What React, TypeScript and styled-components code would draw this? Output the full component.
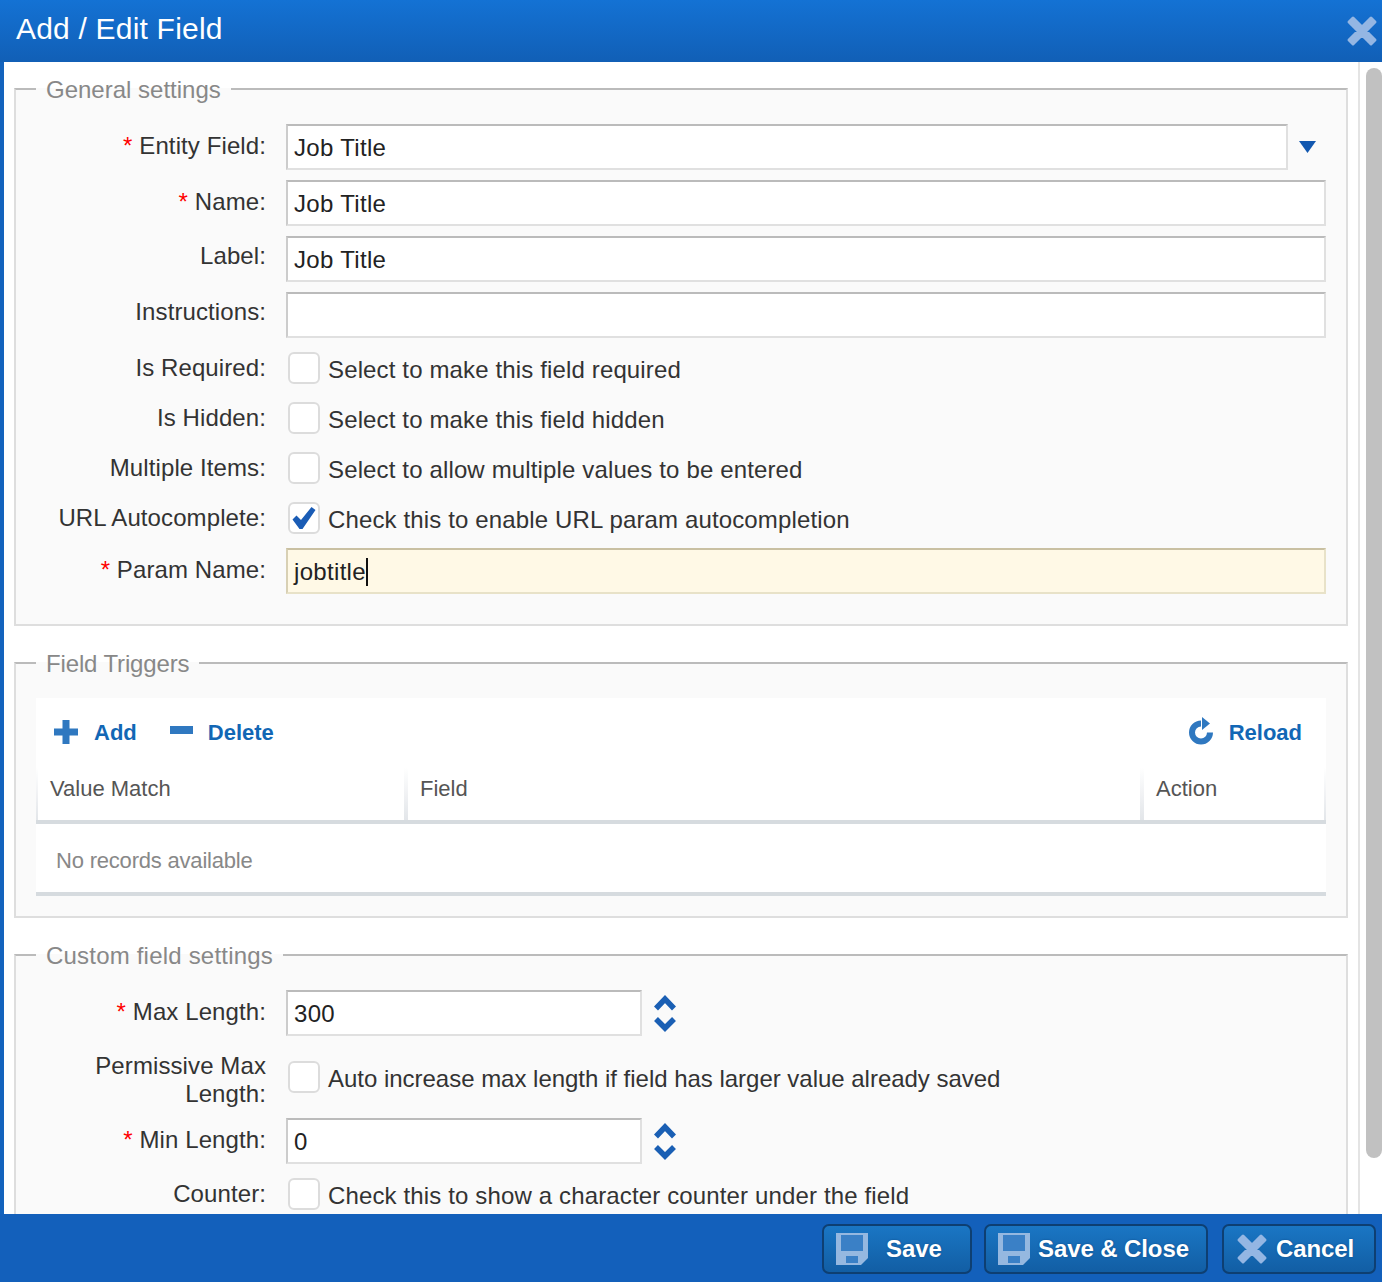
import React from "react";
import styled, { createGlobalStyle } from "styled-components";

const Global = createGlobalStyle`
  html, body { margin: 0; padding: 0; background: #fff; }
  * { box-sizing: border-box; }
  body { font-family: "Liberation Sans", Arial, sans-serif; font-size: 24px; color: #333; }
`;

const Dialog = styled.div`
  width: 1382px;
  height: 1282px;
  display: flex;
  flex-direction: column;
  overflow: hidden;
`;

const TitleBar = styled.header`
  height: 62px;
  flex: none;
  display: flex;
  align-items: center;
  justify-content: space-between;
  padding: 0 4px 0 16px;
  background: linear-gradient(#1472d4, #115fb6);
`;

const Title = styled.h1`
  margin: 0 0 4px;
  font-size: 30px;
  font-weight: 400;
  letter-spacing: 0.2px;
  color: #fff;
`;

const Middle = styled.div`
  flex: 1;
  min-height: 0;
  display: flex;
  border-left: 4px solid #1363bd;
`;

const Content = styled.main`
  width: 1356px;
  flex: none;
  overflow: hidden;
  padding: 13px 10px 0;
  background: #fff;
  border-right: 2px solid #e4e4e4;
`;

const ScrollTrack = styled.div`
  flex: 1;
  padding: 6px 0 0 6px;
  background: #fff;
`;

const ScrollThumb = styled.div`
  height: 1090px;
  background: #c1c1c1;
  border-radius: 8px;
`;

const Group = styled.fieldset<{ $bottom: number }>`
  margin: 0 0 23px;
  padding: 21px 20px ${(p) => p.$bottom}px;
  min-width: 0;
  background: #fafafa;
  border: 2px solid #dedede;
  border-top-color: #bbb;
`;

const Legend = styled.legend<{ $spacing?: number }>`
  padding: 2px 10px 0;
  font-size: 24px;
  line-height: 26px;
  letter-spacing: ${(p) => p.$spacing ?? 0}px;
  color: #888;
`;

const Row = styled.div<{ $h?: number }>`
  display: flex;
  align-items: flex-start;
  gap: 20px;
  min-height: ${(p) => p.$h ?? 46}px;
  margin-bottom: 10px;
`;

const Label = styled.label<{ $required?: boolean }>`
  width: 230px;
  flex: none;
  padding-top: ${(p) => (p.$required ? 8 : 6)}px;
  line-height: 28px;
  text-align: right;
  color: #333;
  letter-spacing: 0.1px;
`;

const Star = styled.span`
  color: #f00;
`;

const Control = styled.div`
  flex: 1;
  min-width: 0;
  align-self: stretch;
  display: flex;
  align-items: center;
`;

const TextField = styled.div<{ $width?: number; $focused?: boolean }>`
  height: 46px;
  flex: ${(p) => (p.$width ? `0 0 ${p.$width}px` : "1")};
  display: flex;
  align-items: center;
  padding: 2px 6px 0;
  font-size: 24px;
  letter-spacing: 0.32px;
  color: #222;
  border: 2px solid ${(p) => (p.$focused ? "#e8e2c8" : "#e0e0e0")};
  border-top-color: ${(p) => (p.$focused ? "#c9c0a2" : "#bbb")};
  border-left-color: ${(p) => (p.$focused ? "#d8d0b4" : "#ccc")};
  background: ${(p) => (p.$focused ? "#fff9e6" : "#fff")};
`;

const Caret = styled.span`
  width: 2px;
  height: 28px;
  background: #111;
`;

const ArrowSlot = styled.div`
  width: 38px;
  flex: none;
  display: flex;
  justify-content: center;
`;

const Spinner = styled.svg`
  margin-left: 12px;
  flex: none;
  display: block;
`;

const CheckBox = styled.span`
  width: 32px;
  height: 32px;
  margin-left: 2px;
  flex: none;
  display: flex;
  align-items: center;
  justify-content: center;
  border: 2px solid #dcdcdc;
  border-radius: 6px;
  background: #fff;
`;

const CheckText = styled.span<{ $spacing?: number }>`
  margin-left: 8px;
  padding-top: 4px;
  letter-spacing: ${(p) => p.$spacing ?? 0.14}px;
  color: #333;
`;

const Grid = styled.section`
  background: #fff;
  border-bottom: 4px solid #d6dbdf;
`;

const Toolbar = styled.div`
  height: 70px;
  display: flex;
  align-items: center;
  padding: 0 24px 0 18px;
`;

const ToolButton = styled.span<{ $gap: number; $after?: string }>`
  display: flex;
  align-items: center;
  gap: ${(p) => p.$gap}px;
  margin-right: ${(p) => p.$after ?? "0"};
  font-size: 22px;
  font-weight: 700;
  color: #1267b5;
`;

const ToolIcon = styled.svg<{ $lift: number }>`
  display: block;
  flex: none;
  margin-top: -${(p) => p.$lift}px;
`;

const HeadRow = styled.div`
  display: grid;
  grid-template-columns: 372px 736px 182px;
  height: 56px;
  border-bottom: 4px solid #d6dbdf;
`;

const HeadCell = styled.div<{ $left?: boolean; $right: number }>`
  display: flex;
  align-items: center;
  padding: 0 0 10px 12px;
  font-size: 22px;
  color: #555;
  border-style: solid;
  border-width: 0 ${(p) => p.$right}px 0 ${(p) => (p.$left ? 2 : 0)}px;
  border-image: linear-gradient(#fff, #e2e5e9) 1;
`;

const EmptyRow = styled.div`
  height: 68px;
  display: flex;
  align-items: center;
  padding: 6px 0 0 20px;
  font-size: 22px;
  letter-spacing: -0.2px;
  color: #888;
`;

const Footer = styled.footer`
  height: 68px;
  flex: none;
  display: flex;
  justify-content: flex-end;
  align-items: flex-start;
  padding: 10px 6px 0 0;
  background: #1360bb;
`;

const Button = styled.button<{ $w: number; $ml: number; $gap: number }>`
  width: ${(p) => p.$w}px;
  height: 50px;
  margin-left: ${(p) => p.$ml}px;
  display: flex;
  align-items: center;
  gap: ${(p) => p.$gap}px;
  padding: 0 0 0 12px;
  font-family: inherit;
  font-size: 24px;
  font-weight: 700;
  letter-spacing: -0.1px;
  color: #fff;
  text-shadow: 0 0 2px #0d4a86;
  border: 2px solid #0e3f72;
  border-radius: 7px;
  background: linear-gradient(#1a76c4, #125ea4);
`;

const CloseX = () => (
  <svg width="32" height="32" viewBox="0 0 32 32" aria-hidden="true">
    <path
      d="M7 3 L16 12 L25 3 L29 7 L20 16 L29 25 L25 29 L16 20 L7 29 L3 25 L12 16 L3 7Z"
      fill="#94b6e3"
      stroke="#94b6e3"
      strokeWidth="3"
      strokeLinejoin="round"
    />
  </svg>
);

const Disk = () => (
  <svg width="32" height="32" viewBox="0 0 32 32" aria-hidden="true">
    <path fill="#95b8e0" d="M0 0H32V25L25 32H0Z" />
    <path fill="#3a80c6" d="M5 2H27V18H5Z M10 23H22V30H10Z" />
  </svg>
);

const Check = () => (
  <svg width="24" height="24" viewBox="0 0 24 24" aria-hidden="true">
    <path d="M0.5 13.5 L4.5 9.5 L9 14 L19.5 1 L23.5 4 L10.5 23 L7.5 23Z" fill="#1a5cb5" />
  </svg>
);

const TextRow = ({ label, required, value, focused }: { label: string; required?: boolean; value: string; focused?: boolean }) => (
  <Row>
    <Label $required={required}>
      {required && <Star>* </Star>}
      {label}
    </Label>
    <Control>
      <TextField $focused={focused}>
        {value}
        {focused && <Caret />}
      </TextField>
    </Control>
  </Row>
);

const CheckRow = ({ label, text, checked, h = 40, spacing }: { label: React.ReactNode; text: string; checked?: boolean; h?: number; spacing?: number }) => (
  <Row $h={h}>
    <Label>{label}</Label>
    <Control>
      <CheckBox>{checked && <Check />}</CheckBox>
      <CheckText $spacing={spacing}>{text}</CheckText>
    </Control>
  </Row>
);

const NumberRow = ({ label, value }: { label: string; value: string }) => (
  <Row>
    <Label $required>
      <Star>* </Star>
      {label}
    </Label>
    <Control>
      <TextField $width={356}>{value}</TextField>
      <Spinner width="22" height="38" viewBox="0 0 22 38" aria-hidden="true">
        <path d="M2 14.5 L11 5 L20 14.5 M2 25 L11 34 L20 25" stroke="#1a5fb4" strokeWidth="5.5" fill="none" />
      </Spinner>
    </Control>
  </Row>
);

export default function App() {
  return (
    <Dialog>
      <Global />
      <TitleBar>
        <Title>Add / Edit Field</Title>
        <CloseX />
      </TitleBar>
      <Middle>
        <Content>
          <Group $bottom={20}>
            <Legend>General settings</Legend>
            <Row>
              <Label $required>
                <Star>* </Star>Entity Field:
              </Label>
              <Control>
                <TextField>Job Title</TextField>
                <ArrowSlot>
                  <svg width="17" height="12" viewBox="0 0 17 12" aria-hidden="true">
                    <path d="M0 0H17L8.5 12Z" fill="#1258b0" />
                  </svg>
                </ArrowSlot>
              </Control>
            </Row>
            <TextRow label="Name:" required value="Job Title" />
            <TextRow label="Label:" value="Job Title" />
            <TextRow label="Instructions:" value="" />
            <CheckRow label="Is Required:" text="Select to make this field required" />
            <CheckRow label="Is Hidden:" text="Select to make this field hidden" />
            <CheckRow label="Multiple Items:" text="Select to allow multiple values to be entered" />
            <CheckRow label="URL Autocomplete:" text="Check this to enable URL param autocompletion" checked />
            <TextRow label="Param Name:" required value="jobtitle" focused />
          </Group>
          <Group $bottom={20}>
            <Legend $spacing={-0.14}>Field Triggers</Legend>
            <Grid>
              <Toolbar>
                <ToolButton $gap={16} $after="33px">
                  <ToolIcon $lift={3} width="24" height="24" viewBox="0 0 24 24" aria-hidden="true">
                    <path d="M8.5 0H15.5V8.5H24V15.5H15.5V24H8.5V15.5H0V8.5H8.5Z" fill="#2f78c0" />
                  </ToolIcon>
                  Add
                </ToolButton>
                <ToolButton $gap={15} $after="auto">
                  <ToolIcon $lift={6} width="23" height="8" viewBox="0 0 23 8" aria-hidden="true">
                    <rect width="23" height="8" fill="#2f78c0" />
                  </ToolIcon>
                  Delete
                </ToolButton>
                <ToolButton $gap={16}>
                  <ToolIcon $lift={4} width="24" height="28" viewBox="0 0 24 28" aria-hidden="true">
                    <path d="M12 6.5 A9 9 0 1 0 21 15.5" stroke="#2f78c0" strokeWidth="6" fill="none" />
                    <path d="M13 0 L21 6.5 L13 13Z" fill="#2f78c0" />
                  </ToolIcon>
                  Reload
                </ToolButton>
              </Toolbar>
              <HeadRow>
                <HeadCell $left $right={4}>Value Match</HeadCell>
                <HeadCell $right={4}>Field</HeadCell>
                <HeadCell $right={2}>Action</HeadCell>
              </HeadRow>
              <EmptyRow>No records available</EmptyRow>
            </Grid>
          </Group>
          <Group $bottom={30}>
            <Legend $spacing={0.2}>Custom field settings</Legend>
            <NumberRow label="Max Length:" value="300" />
            <CheckRow
              h={62}
              label="Permissive Max Length:"
              text="Auto increase max length if field has larger value already saved"
              spacing={-0.02}
            />
            <NumberRow label="Min Length:" value="0" />
            <CheckRow label="Counter:" text="Check this to show a character counter under the field" />
          </Group>
        </Content>
        <ScrollTrack>
          <ScrollThumb />
        </ScrollTrack>
      </Middle>
      <Footer>
        <Button $w={150} $ml={0} $gap={18}>
          <Disk />
          Save
        </Button>
        <Button $w={224} $ml={12} $gap={8}>
          <Disk />
          Save &amp; Close
        </Button>
        <Button $w={154} $ml={14} $gap={8}>
          <CloseX />
          Cancel
        </Button>
      </Footer>
    </Dialog>
  );
}
